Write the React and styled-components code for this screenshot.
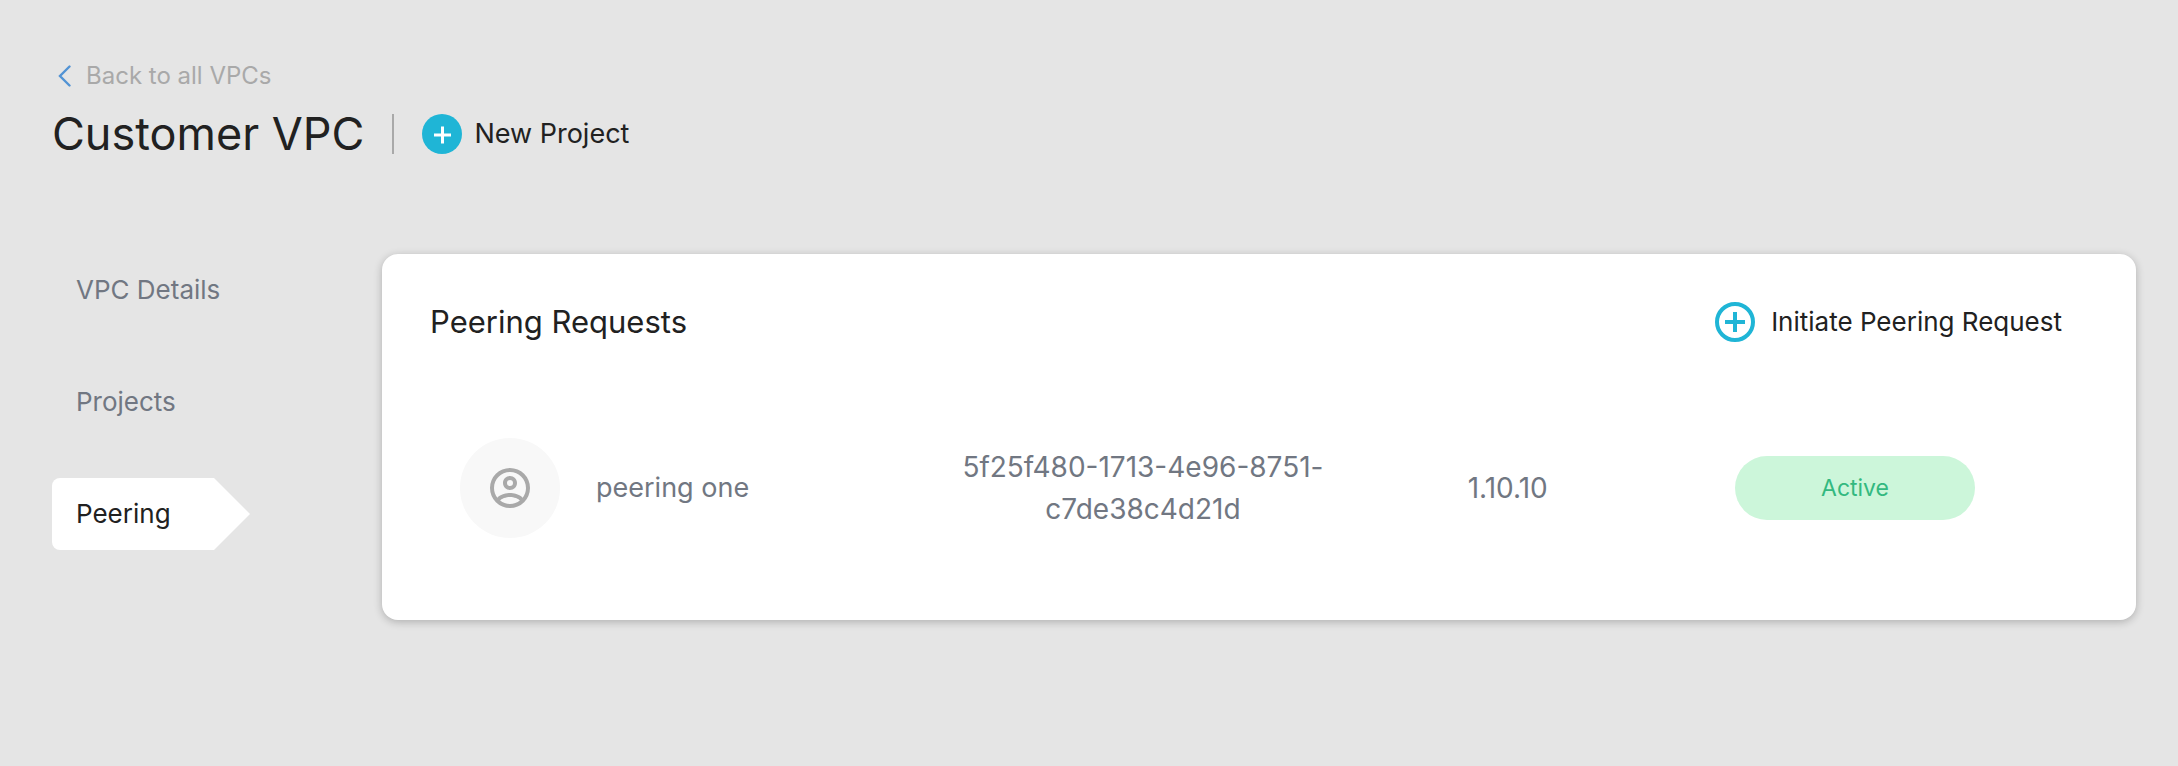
import React from 'react';
import styled, { createGlobalStyle, css } from 'styled-components';

const color = {
  page: '#e5e5e5',
  ink: '#212121',
  muted: '#717782',
  faint: '#a9a9a9',
  accent: '#1fb5d6',
  link: '#5293d4',
};

const GlobalStyle = createGlobalStyle`
  *, *::before, *::after { box-sizing: border-box; }
  body {
    margin: 0;
    background: ${color.page};
    color: ${color.ink};
    font-family: Inter, "Liberation Sans", sans-serif;
  }
`;

const Page = styled.div`
  min-height: 100vh;
  padding: 60px 42px 60px 52px;
`;

const BackLink = styled.a`
  display: flex;
  align-items: center;
  gap: 15px;
  width: fit-content;
  padding-left: 6px;
  color: ${color.faint};
  font-size: 24px;
  line-height: 32px;
  text-decoration: none;
`;

const TitleRow = styled.div`
  display: flex;
  align-items: center;
  gap: 28px;
  margin-top: 12px;
`;

const PageTitle = styled.h1`
  margin: 0;
  font-size: 45px;
  font-weight: 400;
  line-height: 60px;
`;

const Divider = styled.span`
  width: 2px;
  height: 40px;
  background: ${color.faint};
`;

const ActionButton = styled.button`
  display: inline-flex;
  align-items: center;
  gap: ${(p) => p.$gap}px;
  padding: 0;
  border: 0;
  background: none;
  color: inherit;
  font: inherit;
  font-size: ${(p) => p.$size}px;
  line-height: 40px;
  cursor: pointer;
`;

const Body = styled.div`
  display: flex;
  align-items: flex-start;
  margin-top: 90px;
`;

const SideNav = styled.nav`
  display: flex;
  flex: 0 0 330px;
  flex-direction: column;
  align-items: flex-start;
  gap: 40px;
`;

const activeTab = css`
  width: 198px;
  background: #fff;
  color: ${color.ink};
  border-radius: 8px 0 0 8px;
  clip-path: polygon(0 0, 162px 0, 100% 50%, 162px 100%, 0 100%);
`;

const NavItem = styled.a`
  padding: 0 24px;
  color: ${color.muted};
  font-size: 26px;
  line-height: 72px;
  text-decoration: none;
  ${(p) => p.$active && activeTab}
`;

const Card = styled.section`
  flex: 1;
  min-width: 0;
  padding: 48px 48px 76px;
  border-radius: 16px;
  background: #fff;
  box-shadow: 0 2px 8px rgba(0, 0, 0, 0.24);
`;

const CardHeader = styled.header`
  display: flex;
  align-items: center;
  justify-content: space-between;
  padding-right: 26px;
`;

const CardTitle = styled.h2`
  margin: 0;
  font-size: 31px;
  font-weight: 400;
  line-height: 40px;
`;

const RequestTable = styled.table`
  width: 100%;
  margin-top: 90px;
  table-layout: fixed;
  border-collapse: collapse;
  color: ${color.muted};
  font-size: 28px;
  line-height: 42px;
`;

const Cell = styled.td`
  width: ${(p) => p.$width};
  height: 112px;
  padding: 0;
  text-align: center;
`;

const NameCell = styled(Cell)`
  padding-left: 30px;
  font-size: 27px;
  text-align: left;
`;

const StatusCell = styled(Cell)`
  padding-right: 68px;
`;

const Peer = styled.div`
  display: flex;
  align-items: center;
  gap: 36px;
`;

const Avatar = styled.span`
  display: flex;
  align-items: center;
  justify-content: center;
  width: 100px;
  height: 100px;
  border-radius: 50%;
  background: #f8f8f8;
  color: ${color.faint};
`;

const StatusPill = styled.span`
  display: block;
  max-width: 240px;
  margin: 0 auto;
  border-radius: 32px;
  background: #ccf6da;
  color: #33b980;
  font-size: 23px;
  line-height: 64px;
`;

const ChevronLeft = () => (
  <svg width="13" height="22" viewBox="0 0 13 22" fill="none" aria-hidden="true">
    <path d="M11.5 1.5 2 11l9.5 9.5" stroke={color.link} strokeWidth="2.4" strokeLinecap="round" />
  </svg>
);

const PlusFilled = () => (
  <svg width="40" height="40" viewBox="0 0 40 40" aria-hidden="true">
    <circle cx="20" cy="20" r="20" fill={color.accent} />
    <path d="M20.5 12.5v17M12 21h17" stroke="#fff" strokeWidth="3" />
  </svg>
);

const PlusOutline = () => (
  <svg width="40" height="40" viewBox="0 0 40 40" fill="none" aria-hidden="true">
    <circle cx="20" cy="20" r="18" stroke={color.accent} strokeWidth="4" />
    <path d="M20 10v20M10 20h20" stroke={color.accent} strokeWidth="4" />
  </svg>
);

const AccountIcon = () => (
  <svg width="48" height="48" viewBox="0 0 24 24" fill="currentColor" aria-hidden="true">
    <path d="M12,2A10,10 0 0,0 2,12A10,10 0 0,0 12,22A10,10 0 0,0 22,12A10,10 0 0,0 12,2M7.07,18.28C7.5,17.38 10.12,16.5 12,16.5C13.88,16.5 16.5,17.38 16.93,18.28C15.57,19.36 13.86,20 12,20C10.14,20 8.43,19.36 7.07,18.28M18.36,16.83C16.93,15.09 13.46,14.5 12,14.5C10.54,14.5 7.07,15.09 5.64,16.83C4.62,15.5 4,13.82 4,12C4,7.59 7.59,4 12,4C16.41,4 20,7.59 20,12C20,13.82 19.38,15.5 18.36,16.83M12,6C10.06,6 8.5,7.56 8.5,9.5C8.5,11.44 10.06,13 12,13C13.94,13 15.5,11.44 15.5,9.5C15.5,7.56 13.94,6 12,6M12,11A1.5,1.5 0 0,1 10.5,9.5A1.5,1.5 0 0,1 12,8A1.5,1.5 0 0,1 13.5,9.5A1.5,1.5 0 0,1 12,11Z" />
  </svg>
);

const tabs = ['VPC Details', 'Projects', 'Peering'];

const requests = [
  { name: 'peering one', id: '5f25f480-1713-4e96-8751-c7de38c4d21d', cidr: '1.10.10', status: 'Active' },
];

export default function App() {
  return (
    <Page>
      <GlobalStyle />
      <BackLink href="#vpcs">
        <ChevronLeft />
        Back to all VPCs
      </BackLink>
      <TitleRow>
        <PageTitle>Customer VPC</PageTitle>
        <Divider />
        <ActionButton type="button" $gap={12} $size={27}>
          <PlusFilled />
          New Project
        </ActionButton>
      </TitleRow>
      <Body>
        <SideNav>
          {tabs.map((tab) => (
            <NavItem key={tab} href="#tab" $active={tab === 'Peering'} aria-current={tab === 'Peering' ? 'page' : undefined}>
              {tab}
            </NavItem>
          ))}
        </SideNav>
        <Card>
          <CardHeader>
            <CardTitle>Peering Requests</CardTitle>
            <ActionButton type="button" $gap={16} $size={26}>
              <PlusOutline />
              Initiate Peering Request
            </ActionButton>
          </CardHeader>
          <RequestTable>
            <tbody>
              {requests.map((request) => (
                <tr key={request.id}>
                  <NameCell $width="32%">
                    <Peer>
                      <Avatar>
                        <AccountIcon />
                      </Avatar>
                      {request.name}
                    </Peer>
                  </NameCell>
                  <Cell $width="22%">{request.id}</Cell>
                  <Cell $width="22%">{request.cidr}</Cell>
                  <StatusCell $width="24%">
                    <StatusPill>{request.status}</StatusPill>
                  </StatusCell>
                </tr>
              ))}
            </tbody>
          </RequestTable>
        </Card>
      </Body>
    </Page>
  );
}
